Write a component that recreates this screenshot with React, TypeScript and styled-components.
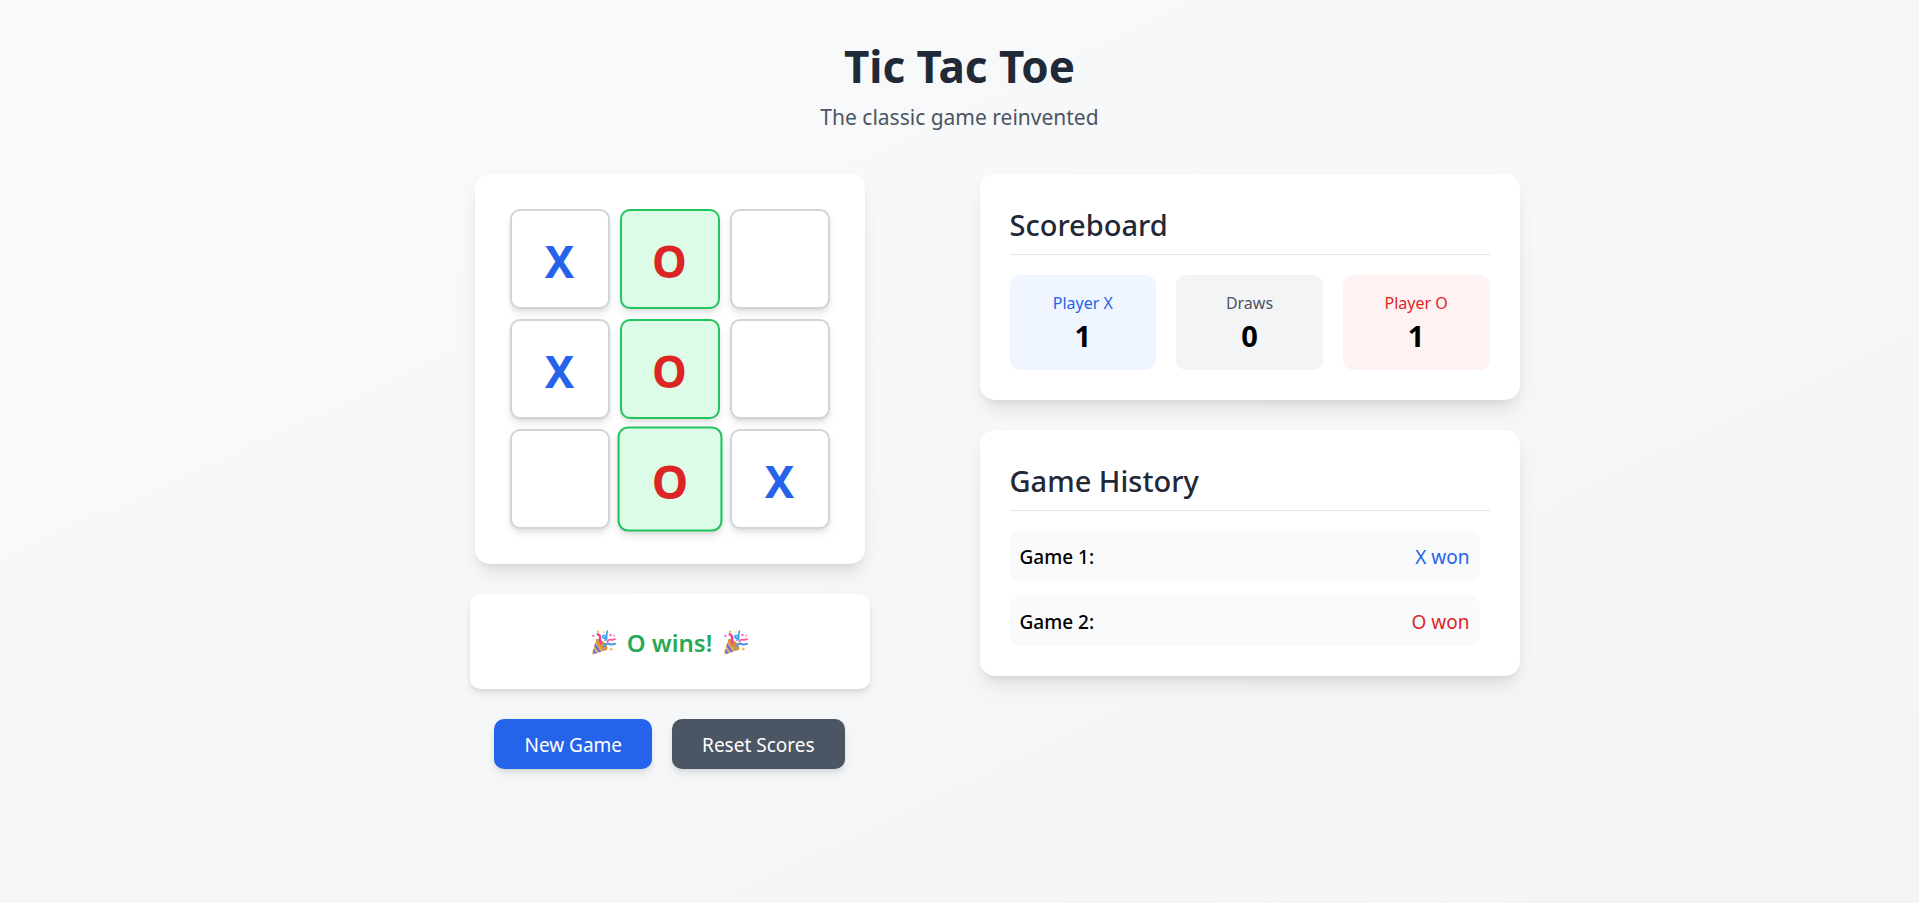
import { useState } from 'react';
import styled, { createGlobalStyle } from 'styled-components';

type Mark = 'X' | 'O';
type Cell = Mark | null;
type Result = Mark | 'Draw';
type Tone = 'blue' | 'gray' | 'red';

const LINES = [
  [0, 1, 2], [3, 4, 5], [6, 7, 8],
  [0, 3, 6], [1, 4, 7], [2, 5, 8],
  [0, 4, 8], [2, 4, 6],
];

const TONES: Record<Tone, { text: string; surface: string }> = {
  blue: { text: '#2563eb', surface: '#eff6ff' },
  gray: { text: '#4b5563', surface: '#f3f4f6' },
  red: { text: '#dc2626', surface: '#fef2f2' },
};

const toneOf = (result: Result): Tone =>
  result === 'X' ? 'blue' : result === 'O' ? 'red' : 'gray';

const GlobalStyle = createGlobalStyle`
  *, *::before, *::after { box-sizing: border-box; }
  body {
    margin: 0;
    color: #000;
    font-family: "Segoe UI", "Noto Sans", sans-serif;
    font-size: 19px;
    line-height: 30px;
  }
  h1, h2, p, ul { margin: 0; padding: 0; }
  button { font-family: inherit; cursor: pointer; }
`;

const Page = styled.div`
  min-height: 100vh;
  padding: 41px 20px;
  background: linear-gradient(to bottom right, #f9fafb, #f3f4f6);
`;

const Container = styled.div`
  max-width: 1120px;
  margin: 0 auto;
`;

const Header = styled.header`
  margin-bottom: 39px;
  text-align: center;
`;

const Title = styled.h1`
  margin-bottom: 9px;
  color: #1f2937;
  font-size: 44px;
  font-weight: 700;
  line-height: 50px;
`;

const Subtitle = styled.p`
  color: #4b5563;
  font-size: 21px;
  line-height: 35px;
`;

const Columns = styled.main`
  display: grid;
  grid-template-columns: 1fr 1fr;
  gap: 40px;

  @media (max-width: 960px) {
    grid-template-columns: 1fr;
  }
`;

const GameColumn = styled.section`
  display: flex;
  flex-direction: column;
  align-items: center;
  gap: 30px;
`;

const InfoColumn = styled.section`
  display: flex;
  flex-direction: column;
  gap: 30px;
`;

const Card = styled.div`
  padding: 30px;
  border-radius: 15px;
  background: #fff;
  box-shadow: 0 12px 19px -4px rgba(0, 0, 0, 0.1), 0 5px 8px -5px rgba(0, 0, 0, 0.1);
`;

const BoardCard = styled(Card)`
  padding: 35px;
`;

const Board = styled.div`
  display: grid;
  grid-template-columns: repeat(3, 100px);
  grid-auto-rows: 100px;
  gap: 10px;
`;

const Square = styled.button<{ $mark: Cell; $winning: boolean; $raised: boolean }>`
  padding: 4px 0 0;
  border: 2px solid ${(p) => (p.$winning ? '#22c55e' : '#d1d5db')};
  border-radius: 10px;
  background: ${(p) => (p.$winning ? '#dcfce7' : '#fff')};
  color: ${(p) => (p.$mark === 'X' ? '#2563eb' : '#dc2626')};
  font-size: 44px;
  font-weight: 700;
  line-height: 50px;
  box-shadow: 0 5px 8px -1px rgba(0, 0, 0, 0.1), 0 2px 5px -2px rgba(0, 0, 0, 0.1);
  transform: ${(p) => (p.$raised ? 'scale(1.05)' : 'none')};
`;

const Status = styled.div`
  width: 100%;
  max-width: 400px;
  padding: 31px 30px 29px;
  border-radius: 10px;
  background: #fff;
  box-shadow: 0 5px 8px -1px rgba(0, 0, 0, 0.1), 0 2px 5px -2px rgba(0, 0, 0, 0.1);
`;

const StatusText = styled.p<{ $won: boolean }>`
  display: flex;
  align-items: center;
  justify-content: center;
  gap: 11px;
  color: ${(p) => (p.$won ? '#16a34a' : '#374151')};
  font-size: 24px;
  font-weight: 600;
  line-height: 35px;
  opacity: 0.93;
`;

const Actions = styled.div`
  display: flex;
  gap: 20px;
`;

const ActionButton = styled.button<{ $primary?: boolean }>`
  padding: 11px 30px 9px;
  border: 0;
  border-radius: 10px;
  background: ${(p) => (p.$primary ? '#2563eb' : '#4b5563')};
  color: #fff;
  font-size: 19px;
  font-weight: 400;
  line-height: 30px;
  box-shadow: 0 5px 8px -1px rgba(0, 0, 0, 0.1), 0 2px 5px -2px rgba(0, 0, 0, 0.1);
`;

const CardTitle = styled.h2`
  margin-bottom: 20px;
  padding: 1px 0 9px;
  border-bottom: 1px solid #e5e7eb;
  color: #1f2937;
  font-size: 29px;
  font-weight: 500;
  line-height: 40px;
`;

const Scores = styled.div`
  display: grid;
  grid-template-columns: repeat(3, 1fr);
  gap: 20px;
`;

const ScoreTile = styled.div<{ $tone: Tone }>`
  padding: 16px 15px 14px;
  border-radius: 10px;
  background: ${(p) => TONES[p.$tone].surface};
  text-align: center;
`;

const ScoreLabel = styled.p<{ $tone: Tone }>`
  color: ${(p) => TONES[p.$tone].text};
  font-size: 16px;
  line-height: 25px;
`;

const ScoreValue = styled.p`
  font-size: 29px;
  font-weight: 700;
  line-height: 40px;
`;

const HistoryList = styled.ul`
  display: flex;
  flex-direction: column;
  gap: 15px;
  max-height: 300px;
  padding-right: 10px;
  overflow-y: auto;
  list-style: none;
`;

const HistoryRow = styled.li`
  display: flex;
  justify-content: space-between;
  padding: 11px 10px 9px;
  border-radius: 10px;
  background: #f9fafb;
`;

const GameName = styled.span`
  font-weight: 500;
`;

const GameResult = styled.span<{ $tone: Tone }>`
  color: ${(p) => TONES[p.$tone].text};
`;

const Popper = styled.svg`
  width: 25px;
  height: 25px;
  flex: none;
`;

function PartyPopper() {
  return (
    <Popper viewBox="0 0 32 32" fill="none" aria-hidden="true">
      <path d="M7 11.500 1.600 29.500c-.3 1.200.5 2 1.700 1.600L20.500 25Z" fill="#f2a93b" />
      <path d="M5.300 17 13 27.600l-3 1.100L4.200 20.700Z" fill="#5b6be0" />
      <path d="M3.200 24 7.500 29.600l-3 1-2.200-3.200Z" fill="#5b6be0" />
      <path d="M8 12 18.500 25.700l-2.700 1L6.600 13.800Z" fill="#7a6ac8" />
      <ellipse cx="13.800" cy="18.500" rx="4.200" ry="9.400" transform="rotate(-45 13.800 18.500)" fill="#d08f33" />
      <path d="M8.500 5.500c3 1.200 3.700 3.800 3 6.500-.5 2.400.1 3.800 1.300 5.200" stroke="#f82f91" strokeWidth="3" strokeLinecap="round" />
      <path d="M21 1.500c-.7 2.200-.5 4-1 6.200-.8 3.500-5 3.400-4.900 1 .2-2.400 3.500-2.400 4.700 0 1 2 .2 3.500-2 4.200" stroke="#2f9ee8" strokeWidth="2.200" strokeLinecap="round" />
      <path d="M21 14.700c1.200-2.300 3-2.700 5-2.200 1.800.4 3 0 4.600-.8" stroke="#f84aa3" strokeWidth="2.300" strokeLinecap="round" />
      <path d="M17 20.500c2.300-3.500 5-3.600 7.500-2.300 2.300 1 4 .2 6-.4" stroke="#3f8eea" strokeWidth="2.700" strokeLinecap="round" />
      <g fill="#f84aa3">
        <circle cx="3" cy="7.500" r="1.400" />
        <circle cx="25" cy="6.500" r="1.500" />
        <circle cx="29.500" cy="7.500" r="1" />
      </g>
      <g fill="#f7b93e">
        <circle cx="9" cy="2" r="1.500" />
        <circle cx="16.500" cy="2.500" r="1" />
        <circle cx="26" cy="24.500" r="1.700" />
      </g>
    </Popper>
  );
}

const findLine = (cells: Cell[]) =>
  LINES.find(([a, b, c]) => cells[a] && cells[a] === cells[b] && cells[a] === cells[c]);

const START: Cell[] = ['X', 'O', null, 'X', 'O', null, null, 'O', 'X'];

export default function App() {
  const [cells, setCells] = useState<Cell[]>(START);
  const [lastMove, setLastMove] = useState<number | null>(7);
  const [history, setHistory] = useState<Result[]>(['X', 'O']);

  const line = findLine(cells);
  const winner = line ? cells[line[0]] : null;
  const full = cells.every(Boolean);
  const next: Mark = cells.filter(Boolean).length % 2 === 0 ? 'X' : 'O';
  const count = (result: Result) => history.filter((r) => r === result).length;

  const play = (index: number) => {
    if (cells[index] || line) return;
    const updated = cells.map((cell, i) => (i === index ? next : cell));
    setCells(updated);
    setLastMove(index);
    if (findLine(updated)) setHistory([...history, next]);
    else if (updated.every(Boolean)) setHistory([...history, 'Draw']);
  };

  const newGame = () => {
    setCells(Array(9).fill(null));
    setLastMove(null);
  };

  const resetScores = () => {
    newGame();
    setHistory([]);
  };

  const scores: { label: string; value: number; tone: Tone }[] = [
    { label: 'Player X', value: count('X'), tone: 'blue' },
    { label: 'Draws', value: count('Draw'), tone: 'gray' },
    { label: 'Player O', value: count('O'), tone: 'red' },
  ];

  return (
    <>
      <GlobalStyle />
      <Page>
        <Container>
          <Header>
            <Title>Tic Tac Toe</Title>
            <Subtitle>The classic game reinvented</Subtitle>
          </Header>
          <Columns>
            <GameColumn>
              <BoardCard>
                <Board>
                  {cells.map((cell, i) => (
                    <Square
                      key={i}
                      type="button"
                      aria-label={`Square ${i + 1}${cell ? `, ${cell}` : ''}`}
                      $mark={cell}
                      $winning={Boolean(line?.includes(i))}
                      $raised={Boolean(line) && lastMove === i}
                      onClick={() => play(i)}
                    >
                      {cell}
                    </Square>
                  ))}
                </Board>
              </BoardCard>
              <Status role="status">
                <StatusText $won={Boolean(winner)}>
                  {winner && <PartyPopper />}
                  <span>{winner ? `${winner} wins!` : full ? "It's a draw!" : `${next}'s turn`}</span>
                  {winner && <PartyPopper />}
                </StatusText>
              </Status>
              <Actions>
                <ActionButton type="button" $primary onClick={newGame}>New Game</ActionButton>
                <ActionButton type="button" onClick={resetScores}>Reset Scores</ActionButton>
              </Actions>
            </GameColumn>
            <InfoColumn>
              <Card>
                <CardTitle>Scoreboard</CardTitle>
                <Scores>
                  {scores.map((score) => (
                    <ScoreTile key={score.label} $tone={score.tone}>
                      <ScoreLabel $tone={score.tone}>{score.label}</ScoreLabel>
                      <ScoreValue>{score.value}</ScoreValue>
                    </ScoreTile>
                  ))}
                </Scores>
              </Card>
              <Card>
                <CardTitle>Game History</CardTitle>
                <HistoryList>
                  {history.map((result, i) => (
                    <HistoryRow key={i}>
                      <GameName>Game {i + 1}:</GameName>
                      <GameResult $tone={toneOf(result)}>
                        {result === 'Draw' ? 'Draw' : `${result} won`}
                      </GameResult>
                    </HistoryRow>
                  ))}
                </HistoryList>
              </Card>
            </InfoColumn>
          </Columns>
        </Container>
      </Page>
    </>
  );
}
